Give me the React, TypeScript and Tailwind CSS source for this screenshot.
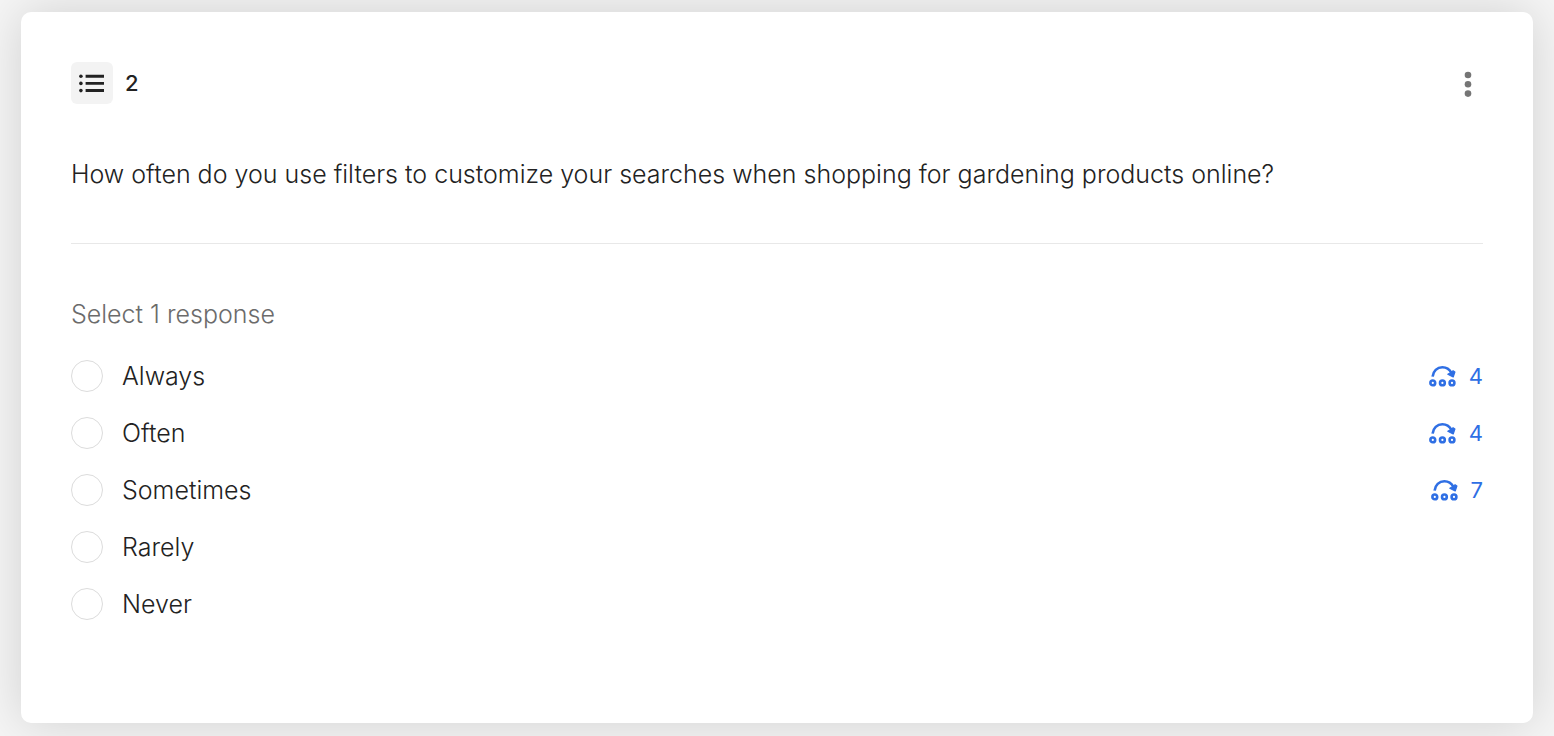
const options = [
  { label: 'Always', skipTo: 4 },
  { label: 'Often', skipTo: 4 },
  { label: 'Sometimes', skipTo: 7 },
  { label: 'Rarely' },
  { label: 'Never' },
];

function ListIcon() {
  return (
    <svg width="26" height="20" viewBox="0 0 26 20" fill="#222" aria-hidden="true">
      <circle cx="1.9" cy="3.3" r="1.8" />
      <circle cx="1.9" cy="10.4" r="1.8" />
      <circle cx="1.9" cy="17.6" r="1.8" />
      <path d="M6.6 1.8h18.4v2.9H6.6zM6.6 8.9h18.4v2.9H6.6zM6.6 16.1h18.4v2.9H6.6z" />
    </svg>
  );
}

function DotsIcon() {
  return (
    <svg width="8" height="28" viewBox="0 0 8 28" fill="#757575" aria-hidden="true">
      <circle cx="4" cy="6" r="3.3" />
      <circle cx="4" cy="15.3" r="3.3" />
      <circle cx="4" cy="24.6" r="3.3" />
    </svg>
  );
}

function SkipIcon() {
  return (
    <svg width="28" height="22" viewBox="0 0 28 22" fill="none" stroke="#2f6fe4" strokeWidth="2.6" aria-hidden="true">
      <circle cx="3.8" cy="17.9" r="2.4" />
      <circle cx="13.4" cy="17.9" r="2.4" />
      <circle cx="23" cy="17.9" r="2.4" />
      <path d="M3.6 11.7C4 6.1 8.2 2.2 13.4 2.2c4.2 0 7.2 2.2 9 5.6" />
      <path d="M18.8 9.3l2.7-1.6 2.6-1.9 1.8 1.2-1.7 5z" fill="#2f6fe4" strokeWidth="1.2" strokeLinejoin="round" />
    </svg>
  );
}

export default function App() {
  return (
    <main className="min-h-screen bg-[#f5f5f5] px-[21px] pt-3 pb-[13px] font-['Inter',sans-serif] text-[#222]">
      <section className="rounded-[10px] bg-white px-[50px] pt-[50px] pb-[103px] shadow-[0_0_50px_rgba(0,0,0,0.15)]">
        <header className="flex items-center justify-between">
          <div className="flex items-center gap-3">
            <span className="flex size-[42px] items-center justify-center rounded-md bg-[#f3f3f3]">
              <ListIcon />
            </span>
            <span className="text-[22px] leading-8 font-medium">2</span>
          </div>
          <button type="button" aria-label="Question options" className="flex h-[42px] w-[30px] items-center justify-center">
            <DotsIcon />
          </button>
        </header>

        <h2 className="mt-[50px] text-[25px] leading-10 font-light">
          How often do you use filters to customize your searches when shopping for gardening products online?
        </h2>
        <hr className="mt-[49px] border-[#e8e8e8]" />

        <fieldset>
          <legend className="pt-[54px] text-[25px] leading-8 font-light text-[#6b6b6b]">Select 1 response</legend>
          <div className="mt-[30px] flex flex-col gap-[25px]">
            {options.map((o) => (
              <div key={o.label} className="flex h-8 items-center justify-between">
                <label className="flex items-center gap-[19px] text-[25px] leading-8 font-light">
                  <input
                    type="radio"
                    name="frequency"
                    className="size-8 appearance-none rounded-full border border-[#dcdcdc] bg-white checked:border-[9px] checked:border-[#2f6fe4]"
                  />
                  {o.label}
                </label>
                {o.skipTo && (
                  <a href={`#question-${o.skipTo}`} className="flex items-center gap-3 text-[22px] leading-8 text-[#2f6fe4]">
                    <SkipIcon />
                    {o.skipTo}
                  </a>
                )}
              </div>
            ))}
          </div>
        </fieldset>
      </section>
    </main>
  );
}
